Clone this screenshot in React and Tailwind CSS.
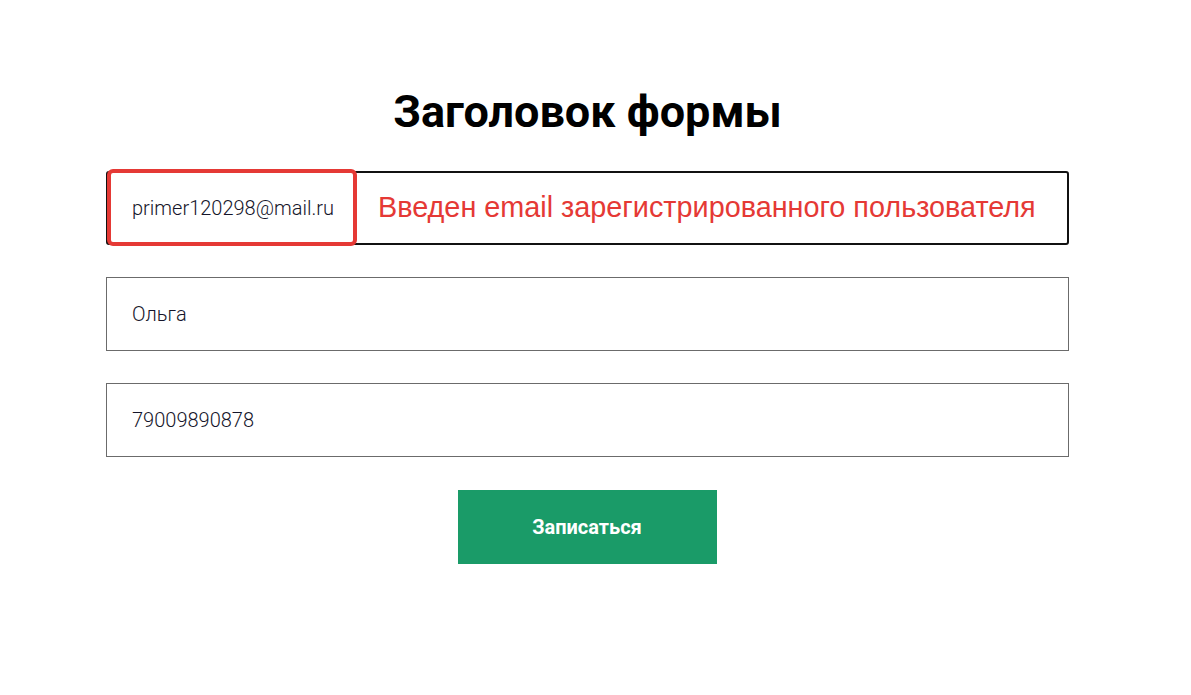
import React from 'react';

const Field = ({ value, className = '' }) => (
  <div className={`h-[74px] w-full flex items-center bg-white text-[20px] text-[#15152a] ${className}`}>
    <span className="font-['Roboto',sans-serif] font-light">{value}</span>
  </div>
);

const App = () => {
  return (
    <div className="min-h-[695px] w-full bg-white">
      <div className="w-[963px] ml-[106px] pt-[82px] flex flex-col">
        <h1 className="text-center font-['Roboto',sans-serif] font-bold text-[45px] leading-[60px] text-black">
          Заголовок формы
        </h1>

        <div className="relative mt-[29px]">
          <Field value="primer120298@mail.ru" className="pl-[24px] border-2 border-[#111] rounded-[3px]" />
          {/* red annotation frame over the email */}
          <div className="absolute left-[1px] top-[-2px] w-[250px] h-[77px] border-[4px] border-[#e53935] rounded-[6px]" />
          <div className="absolute left-[272px] top-0 h-[74px] flex items-center font-['Liberation_Sans',Arial,sans-serif] text-[28.8px] text-[#e53935]">
            Введен email зарегистрированного пользователя
          </div>
        </div>

        <Field value="Ольга" className="mt-[32px] pl-[25px] border border-[#6b6b6b]" />
        <Field value="79009890878" className="mt-[32px] pl-[25px] border border-[#6b6b6b]" />

        <button className="mt-[33px] self-center ml-[-1px] w-[259px] h-[74px] bg-[#1a9b68] text-white font-['Roboto',sans-serif] font-bold text-[20px]">
          Записаться
        </button>
      </div>
    </div>
  );
};

export default App;
